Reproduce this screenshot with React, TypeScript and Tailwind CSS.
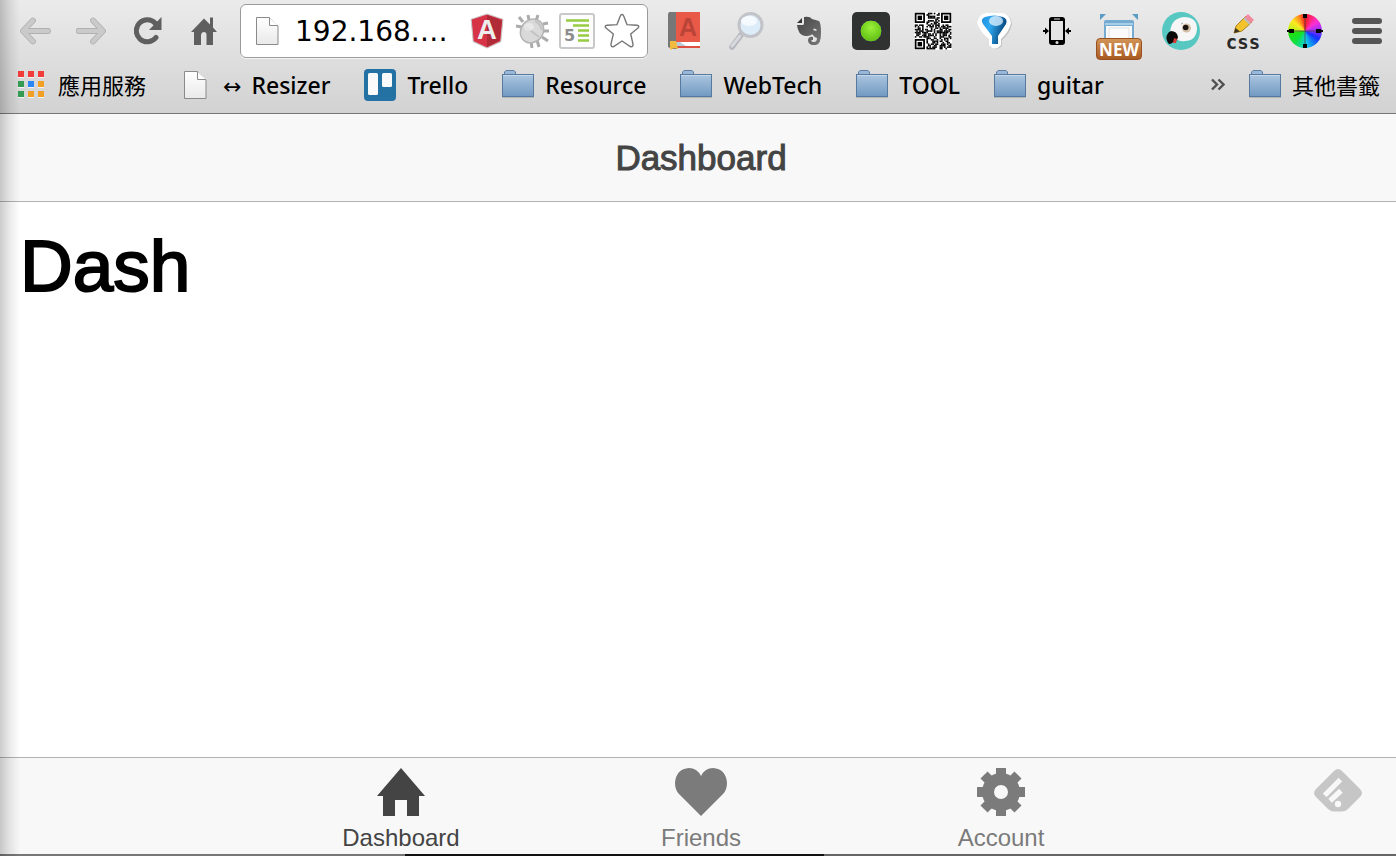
import type { ReactNode } from "react";

const LATIN = "font-['Noto_Sans','Noto_Sans_CJK_TC',sans-serif]";

function IconButton({ label, className = "", children }: { label: string; className?: string; children: ReactNode }) {
  return (
    <button type="button" aria-label={label} className={`flex shrink-0 items-center justify-center ${className}`}>
      {children}
    </button>
  );
}

function PageIcon() {
  return (
    <svg width="23" height="30" viewBox="0 0 23 30" className="shrink-0">
      <defs>
        <linearGradient id="paper" x1="0" y1="0" x2="0" y2="1">
          <stop offset="0" stopColor="#fff" />
          <stop offset="1" stopColor="#e9e9e9" />
        </linearGradient>
      </defs>
      <path d="M.5 1.500H13.500L22 10V28.500H.5Z" fill="url(#paper)" stroke="#8a8a8a" />
      <path d="M13.500 1.500V9.500H22" fill="#fff" stroke="#8a8a8a" />
    </svg>
  );
}

function FolderIcon() {
  return (
    <svg width="32" height="30" viewBox="0 0 32 30" className="shrink-0">
      <defs>
        <linearGradient id="folder" x1="0" y1="0" x2="0" y2="1">
          <stop offset="0" stopColor="#acc6df" />
          <stop offset="1" stopColor="#7199c2" />
        </linearGradient>
      </defs>
      <path d="M2.500 5V2L4 .5H12L13.500 2V5" fill="#9ab7d8" stroke="#5c7fa3" />
      <rect x=".5" y="4.500" width="31" height="22" fill="url(#folder)" stroke="#567a9f" />
      <path d="M1 5.500H31" stroke="#c6d8ea" />
      <path d="M0 27.500H32" stroke="#b5b5b5" />
    </svg>
  );
}

function AppsIcon() {
  const colors = ["#f23c3a", "#f23c3a", "#f23c3a", "#349c52", "#2b87f5", "#f29f26", "#349c52", "#f29f26", "#f29f26"];
  return (
    <svg width="26" height="27" viewBox="0 0 26 27" className="shrink-0">
      {colors.map((c, i) => (
        <g key={i}>
          <rect x={(i % 3) * 10} y={Math.floor(i / 3) * 10 + 1} width="6" height="6" fill="#f4f4f4" />
          <rect x={(i % 3) * 10} y={Math.floor(i / 3) * 10} width="6" height="6" fill={c} />
        </g>
      ))}
    </svg>
  );
}

function TrelloIcon() {
  return (
    <svg width="32" height="32" viewBox="0 0 32 32" className="shrink-0">
      <rect width="32" height="32" rx="4" fill="#2472a4" />
      <rect x="4" y="4" width="10" height="22" rx="1.500" fill="#fafafa" />
      <rect x="18" y="4" width="10" height="14" rx="1.500" fill="#fafafa" />
    </svg>
  );
}

function QrIcon() {
  const n = 25;
  const cells: ReactNode[] = [];
  for (let y = 0; y < n; y++) {
    for (let x = 0; x < n; x++) {
      const corner = (x < 8 && y < 8) || (x > 16 && y < 8) || (x < 8 && y > 16);
      const v = Math.sin(x * 12.9 + y * 78.2) * 43758.5;
      if (!corner && v - Math.floor(v) > 0.45) cells.push(<rect key={`${x}-${y}`} x={x} y={y} width="1.1" height="1.1" />);
    }
  }
  return (
    <svg width="38" height="38" viewBox="-0.5 -0.5 26 26">
      <rect x="-0.5" y="-0.5" width="26" height="26" fill="#fff" />
      {cells}
      {[[0, 0], [18, 0], [0, 18]].map(([x, y]) => (
        <g key={`${x}/${y}`}>
          <rect x={x + 0.6} y={y + 0.6} width="5.8" height="5.8" fill="none" stroke="#000" strokeWidth="1.2" />
          <rect x={x + 2} y={y + 2} width="3" height="3" />
        </g>
      ))}
    </svg>
  );
}

function Navigation() {
  return (
    <nav aria-label="History" className="flex items-center gap-6">
      <IconButton label="Back" className="w-8">
        <svg width="32" height="28" viewBox="0 0 32 28" fill="none" strokeLinecap="round" strokeLinejoin="round">
          <path d="M13 3.500L3 14L13 24.500M4 14H28" stroke="#b0b0b0" strokeWidth="5.800" />
          <path d="M13 3.500L3 14L13 24.500M4 14H28" stroke="#cacaca" strokeWidth="4.200" />
        </svg>
      </IconButton>
      <IconButton label="Forward" className="w-8">
        <svg width="32" height="28" viewBox="0 0 32 28" fill="none" strokeLinecap="round" strokeLinejoin="round">
          <path d="M17 3.500L27 14L17 24.500M26 14H2.500" stroke="#b0b0b0" strokeWidth="5.800" />
          <path d="M17 3.500L27 14L17 24.500M26 14H2.500" stroke="#cacaca" strokeWidth="4.200" />
        </svg>
      </IconButton>
      <IconButton label="Reload" className="w-8">
        <svg width="28" height="28" viewBox="0 0 28 28">
          <path d="M22 20.500A11 11 0 1 1 21.500 6.500" fill="none" stroke="#5f5f5f" strokeWidth="5" strokeLinecap="round" />
          <path d="M27.500 0V13H15Z" fill="#5f5f5f" />
        </svg>
      </IconButton>
      <IconButton label="Home" className="w-8">
        <svg width="26" height="28" viewBox="0 0 26 28" fill="#5f5f5f">
          <path d="M0 15L13 1.500L19 7.500V0.500H22V10.500L26 15H22V28H15.500V18Q15.500 15 13 15T10 18V28H3V15Z" />
        </svg>
      </IconButton>
    </nav>
  );
}

function Omnibox() {
  return (
    <div className="flex h-[54px] min-w-0 flex-1 items-center rounded-md border border-[#9b9b9b] bg-white pr-[7px] pl-[15px] shadow-[0_1px_0_#f4f4f4]">
      <PageIcon />
      <input
        aria-label="Address"
        defaultValue="192.168.…"
        className="ml-4 w-0 min-w-0 flex-1 bg-transparent pt-[2px] font-['DejaVu_Sans',sans-serif] text-[28px] text-black outline-none"
      />
      <div className="flex items-center gap-[9px]">
        <IconButton label="AngularJS" className="size-9">
          <svg width="34" height="36" viewBox="0 0 32 34">
            <path d="M16 1L31 6L29 27L16 33L3 27L1 6Z" fill="#d63346" stroke="#c9c3c3" strokeWidth="1" />
            <path d="M16 2L30 7L28 26L16 32Z" fill="#b02a38" />
            <text x="16" y="25" textAnchor="middle" fontFamily="Liberation Sans" fontWeight="bold" fontSize="26" fill="#eee">A</text>
          </svg>
        </IconButton>
        <IconButton label="Debugger" className="size-9">
          <svg width="36" height="36" viewBox="0 0 36 36">
            <g stroke="#ababab" strokeWidth="3" fill="none">
              <path d="M5 4L9 9M14 2L15 7M24 2L22 8M29 11L34 10M30 18H35M28 24L34 28M23 27L25 34M17 28L18 35M2 13L8 14" />
            </g>
            <ellipse cx="18" cy="18" rx="11" ry="12.500" transform="rotate(40 18 18)" fill="#d9d9d9" stroke="#b4b4b4" strokeWidth="1.500" />
            <path d="M12 14L25 24M21 8Q26 10 28 17" stroke="#c2c2c2" fill="none" strokeWidth="2" />
            <ellipse cx="15" cy="14" rx="5" ry="4" fill="#eee" opacity=".7" />
          </svg>
        </IconButton>
        <IconButton label="Outline" className="size-9">
          <svg width="36" height="36" viewBox="0 0 36 36">
            <rect x="1" y="1" width="34" height="34" rx="2" fill="#fdfdfd" stroke="#c9c9c9" strokeWidth="2" />
            <path d="M7 7.500H30M14 12.500H30M19 17.500H30M19 22.500H30M19 27.500H30" stroke="#97cc42" strokeWidth="2.600" />
            <text x="5" y="28" fontFamily="DejaVu Sans" fontWeight="bold" fontSize="16" fill="#8d8d8d">5</text>
          </svg>
        </IconButton>
        <IconButton label="Bookmark this page" className="size-9">
          <svg width="36" height="36" viewBox="0 0 36 36">
            <path d="M18 1.500Q19.200 1.500 19.700 3L23 11.600L33 12.300Q36 13 34 15L26.700 21L29 31.200Q29 34.500 26.300 33.500L18 28L9.700 33.500Q7 34.500 7 31.200L9.300 21L2 15Q0 13 3 12.300L13 11.600L16.300 3Q16.800 1.500 18 1.500Z" fill="#fff" stroke="#777" strokeWidth="1.400" />
          </svg>
        </IconButton>
      </div>
    </div>
  );
}

function Extensions() {
  return (
    <div className="flex shrink-0 items-center gap-6">
      <IconButton label="Dictionary" className="size-[38px]">
        <svg width="38" height="38" viewBox="0 0 38 38">
          <path d="M3 0H11V37H6L2 35V2Z" fill="#777" />
          <path d="M10 0H34V30H10Z" fill="#e85948" />
          <path d="M10 30H34V36H10Z" fill="#fff" />
          <path d="M14 30L20 34H10V30Z" fill="#b9cdd9" />
          <path d="M10 35H34" stroke="#dd4f40" strokeWidth="2" />
          <path d="M4 29H10L12 37L8 36L4 38Z" fill="#f0bb3e" />
          <text x="22" y="24" textAnchor="middle" fontFamily="Liberation Sans" fontWeight="bold" fontSize="25" fill="#bb4438">A</text>
        </svg>
      </IconButton>
      <IconButton label="Search" className="size-[38px]">
        <svg width="38" height="38" viewBox="0 0 38 38">
          <path d="M13 23L4 35" stroke="#b4b6bd" strokeWidth="5.500" strokeLinecap="round" />
          <path d="M12 24L4 34" stroke="#d6d8de" strokeWidth="3" strokeLinecap="round" />
          <circle cx="22.500" cy="13" r="11.500" fill="#dcecf8" stroke="#c2c3c8" strokeWidth="3" />
          <ellipse cx="21" cy="9" rx="8" ry="5" fill="#f5fafe" />
        </svg>
      </IconButton>
      <IconButton label="Evernote" className="size-[38px]">
        <svg width="26" height="30" viewBox="0 0 26 30">
          <defs>
            <linearGradient id="elephant" x1="0" y1="0" x2="1" y2="1">
              <stop offset="0" stopColor="#444" />
              <stop offset="1" stopColor="#777" />
            </linearGradient>
          </defs>
          <path d="M8 1Q14 0 16 3L23 5Q25 7 25 17Q25 28 20 29H16Q12 28 12 24Q13 20 17 21V24H15.500Q15 26 18 26Q21 26 21 22Q18 21 16 18Q15 20 9 20Q2 19 1 9H7Q8 9 8 7Z" fill="url(#elephant)" />
          <path d="M1 7L6 2V7Z" fill="#333" />
          <path d="M17 14Q18 11 21 14L20 15Z" fill="#ddd" />
        </svg>
      </IconButton>
      <IconButton label="Status" className="size-[38px]">
        <svg width="38" height="38" viewBox="0 0 38 38">
          <defs>
            <radialGradient id="lamp" cx=".5" cy=".35" r=".7">
              <stop offset="0" stopColor="#9cf03c" />
              <stop offset=".5" stopColor="#78d522" />
              <stop offset="1" stopColor="#5eb616" />
            </radialGradient>
          </defs>
          <rect width="38" height="38" rx="5" fill="#303232" />
          <circle cx="19" cy="19" r="11" fill="url(#lamp)" stroke="#2b2146" />
        </svg>
      </IconButton>
      <IconButton label="QR code" className="size-[38px]">
        <QrIcon />
      </IconButton>
      <IconButton label="Pin" className="size-[38px]">
        <svg width="38" height="38" viewBox="0 0 38 38">
          <defs>
            <linearGradient id="pin" x1="0" y1="0" x2="1" y2=".3">
              <stop offset="0" stopColor="#1f90e0" />
              <stop offset=".4" stopColor="#2fa9f0" />
              <stop offset="1" stopColor="#06457c" />
            </linearGradient>
          </defs>
          <path d="M11 1H27Q34 2 35 11Q33 21 25 27V33Q19 39 14 33V26Q5 20 2 11Q4 2 11 1Z" fill="#c4c4c4" transform="translate(1 1)" />
          <path d="M10 1H26Q34 2 35 11Q33 20 25 27V33Q19 40 13 33V27Q4 20 1 11Q3 2 10 1Z" fill="#fff" />
          <path d="M9 5Q18 2 27 5Q32 7 30 12L22 24V32H16V24L7 12Q4 7 9 5Z" fill="url(#pin)" />
          <ellipse cx="20" cy="9" rx="7" ry="5" fill="#d8eefe" opacity=".8" />
        </svg>
      </IconButton>
      <IconButton label="Mobile view" className="size-[38px]">
        <svg width="30" height="30" viewBox="0 0 30 30">
          <rect x="7" y="1" width="16" height="28" rx="3" />
          <rect x="9" y="5" width="12" height="19" fill="#e4e4e4" />
          <path d="M12 3H18" stroke="#ddd" />
          <circle cx="15" cy="26.500" r="1.500" fill="#ddd" />
          <path d="M1 14H3V11.500L7 15L3 18.500V16H1ZM29 14H27V11.500L23 15L27 18.500V16H29Z" />
        </svg>
      </IconButton>
      <IconButton label="Window resizer" className="relative size-[38px]">
        <svg width="38" height="38" viewBox="0 0 38 38">
          <path d="M0 2H6L0 8ZM38 2H32L38 8Z" fill="#5b9cc5" />
          <rect x="4" y="8" width="30" height="30" rx="2" fill="#75abd0" />
          <rect x="6" y="14" width="26" height="24" fill="#fafafa" />
          <rect x="9" y="16" width="20" height="22" fill="none" stroke="#e2e2e2" />
          <path d="M5 12H33" stroke="#a8cee6" strokeWidth="2" />
        </svg>
        <span className="absolute -bottom-[10px] -left-1 flex h-[22px] w-[46px] items-center justify-center rounded border border-[#995020] bg-linear-to-b from-[#d29457] to-[#a95a20] font-['Open_Sans',sans-serif] text-[17px] leading-none font-bold text-white">
          NEW
        </span>
      </IconButton>
      <IconButton label="Parrot" className="size-[38px]">
        <svg width="38" height="38" viewBox="0 0 38 38">
          <circle cx="19" cy="19" r="19" fill="#56c8c1" />
          <path d="M8 21Q9 6 22 5Q35 5 35 17Q34 29 23 29Q17 30 14 26Z" fill="#f6f6f6" />
          <circle cx="24.500" cy="16" r="4.500" fill="#d3c0a6" />
          <circle cx="23.700" cy="15.500" r="2.800" fill="#1c1310" />
          <path d="M9 19Q15 19 16 25Q15 30 11 30Q10 32 7 32Q3 27 5 23Q6 20 9 19Z" fill="#0b0b0b" />
          <path d="M12 26L15 27L14 31L11 31Z" fill="#d63a32" />
          <path d="M19 12L21 11" stroke="#aaa" />
        </svg>
      </IconButton>
      <IconButton label="Edit CSS" className="size-[38px]">
        <svg width="38" height="46" viewBox="0 -4 38 46">
          <path d="M10 21L12 14L22 4L28 10L18 19Z" fill="#f3c32c" stroke="#a98122" />
          <path d="M10 21L11.500 16L16 19.500Z" fill="#3d3320" />
          <path d="M20 6L24 2L30 8L26 12Z" fill="#ef8b9c" />
          <path d="M20 6L26 12" stroke="#bbb" strokeWidth="2" />
          <text x="19" y="37" textAnchor="middle" fontFamily="DejaVu Sans Mono" fontWeight="bold" fontSize="19" fill="#2a2a2a">css</text>
        </svg>
      </IconButton>
      <IconButton label="Colour picker" className="relative size-[38px]">
        <span className="size-[34px] rounded-full bg-[conic-gradient(#ff1a1a,#ff30d0_50deg,#a030ff_85deg,#1530ff_120deg,#10d0e8_175deg,#10e040_220deg,#20e010_260deg,#c8f020_280deg,#ffe820_310deg,#ff9020_335deg,#ff1a1a)]" />
        <svg width="38" height="38" viewBox="0 0 38 38" className="absolute inset-0">
          <path d="M19 3V35M3 19H35" stroke="#444" strokeWidth=".8" />
          <path d="M19 2V6M19 32V36M3 19H8M30 19H35" stroke="#000" strokeWidth="4" />
          <path d="M1 19H4M34 19H37" stroke="#000" strokeWidth="2" />
        </svg>
      </IconButton>
      <IconButton label="Menu" className="size-[38px]">
        <svg width="30" height="28" viewBox="0 0 30 28">
          <path d="M3 4H27M3 14H27M3 24H27" stroke="#555" strokeWidth="6" strokeLinecap="round" />
        </svg>
      </IconButton>
    </div>
  );
}

function Bookmark({ icon, children, className = "gap-[11px]" }: { icon: ReactNode; children: ReactNode; className?: string }) {
  return (
    <a href="#" className={`flex shrink-0 items-center whitespace-nowrap ${className}`}>
      {icon}
      <span>{children}</span>
    </a>
  );
}

function BookmarkBar() {
  return (
    <nav aria-label="Bookmarks" className={`flex h-[51px] items-center gap-[34px] pb-[6px] pr-4 pl-[18px] text-[23px] leading-8 font-medium text-black ${LATIN}`}>
      <Bookmark icon={<AppsIcon />} className="mr-1 gap-[14px] text-[22px] font-normal">應用服務</Bookmark>
      <Bookmark icon={<PageIcon />} className="gap-4">
        <span className="mr-[10px] font-['DejaVu_Sans',sans-serif] text-[22px] leading-none">↔</span>Resizer
      </Bookmark>
      <Bookmark icon={<TrelloIcon />}>Trello</Bookmark>
      <Bookmark icon={<FolderIcon />}>Resource</Bookmark>
      <Bookmark icon={<FolderIcon />}>WebTech</Bookmark>
      <Bookmark icon={<FolderIcon />}>TOOL</Bookmark>
      <Bookmark icon={<FolderIcon />}>guitar</Bookmark>
      <div className="ml-auto flex items-center gap-6">
        <IconButton label="More bookmarks">
          <svg width="14" height="13" viewBox="0 0 14 13" fill="none" stroke="#505050" strokeWidth="2.400">
            <path d="M1 1.500L6 6.500L1 11.500M7.500 1.500L12.500 6.500L7.500 11.500" />
          </svg>
        </IconButton>
        <Bookmark icon={<FolderIcon />} className="gap-[11px] text-[22px] font-normal">其他書籤</Bookmark>
      </div>
    </nav>
  );
}

function Tab({ label, active = false, children }: { label: string; active?: boolean; children: ReactNode }) {
  return (
    <a href="#" className={`flex w-[300px] flex-col items-center gap-2 pt-[10px] ${active ? "text-[#444]" : "text-[#7b7b7b]"}`}>
      <svg width="52" height="48" viewBox="0 0 52 48" fill="currentColor">{children}</svg>
      <span className="text-2xl leading-7">{label}</span>
    </a>
  );
}

export default function App() {
  return (
    <div className="relative flex min-h-screen flex-col bg-white font-['Liberation_Sans',sans-serif]">
      <header className="border-b border-[#777] bg-linear-to-b from-[#ebebeb] to-[#d2d2d2]">
        <div className="flex h-[62px] items-center pr-[10px] pl-5">
          <Navigation />
          <div className="mr-[18px] ml-5 flex min-w-0 flex-1">
            <Omnibox />
          </div>
          <Extensions />
        </div>
        <BookmarkBar />
      </header>

      <div className="flex h-[88px] items-center justify-center border-b border-[#b2b2b2] bg-[#f8f8f8] pl-[6px]">
        <h1 className="text-[35px] leading-10 text-[#444] [-webkit-text-stroke:1px_#444]">Dashboard</h1>
      </div>

      <main className="flex-1 px-5 pt-6">
        <h2 className="text-[73px] leading-20 text-black [-webkit-text-stroke:2px_#000]">Dash</h2>
      </main>

      <footer className="relative border-t border-[#b2b2b2] bg-[#f8f8f8]">
        <nav aria-label="Sections" className="flex h-24 justify-center pl-[6px]">
          <Tab label="Dashboard" active>
            <path d="M26 0L50 28H44V48H32V32H20V48H8V28H2Z" />
          </Tab>
          <Tab label="Friends">
            <path d="M26 48L4 26Q0 22 0 15Q1 1 14 0Q22 0 26 8Q30 0 38 0Q51 1 52 15Q52 22 48 26Z" />
          </Tab>
          <Tab label="Account">
            <g transform="translate(26 24)">
              {[0, 45, 90, 135].map((a) => (
                <rect key={a} x="-5" y="-24" width="10" height="48" transform={`rotate(${a})`} />
              ))}
              <circle r="19" />
              <circle r="7" fill="#f8f8f8" />
            </g>
          </Tab>
        </nav>
        <button type="button" aria-label="Add to Feedly" className="absolute top-[11px] right-[34px]">
          <svg width="48" height="43" viewBox="0 0 48 43">
            <path d="M20 2Q24 -2 28 2L46 20Q50 24 46 28L34 40Q31 42.500 28 42.500H20Q17 42.500 14 40L2 28Q-2 24 2 20Z" fill="#c6c6c6" />
            <path d="M12.500 24.500L24.500 12.500M18 30L25 23.500" stroke="#f8f8f8" strokeWidth="5.200" strokeLinecap="square" strokeLinejoin="round" />
            <circle cx="24" cy="35" r="3.200" fill="#f8f8f8" />
          </svg>
        </button>
        <div className="h-[2px] bg-[linear-gradient(90deg,#777_0_29%,#111_29%_59%,#666_59%)]" />
      </footer>

      <div className="pointer-events-none absolute inset-y-0 left-0 w-5 bg-linear-to-r from-black/20 via-black/8 to-transparent" />
    </div>
  );
}
